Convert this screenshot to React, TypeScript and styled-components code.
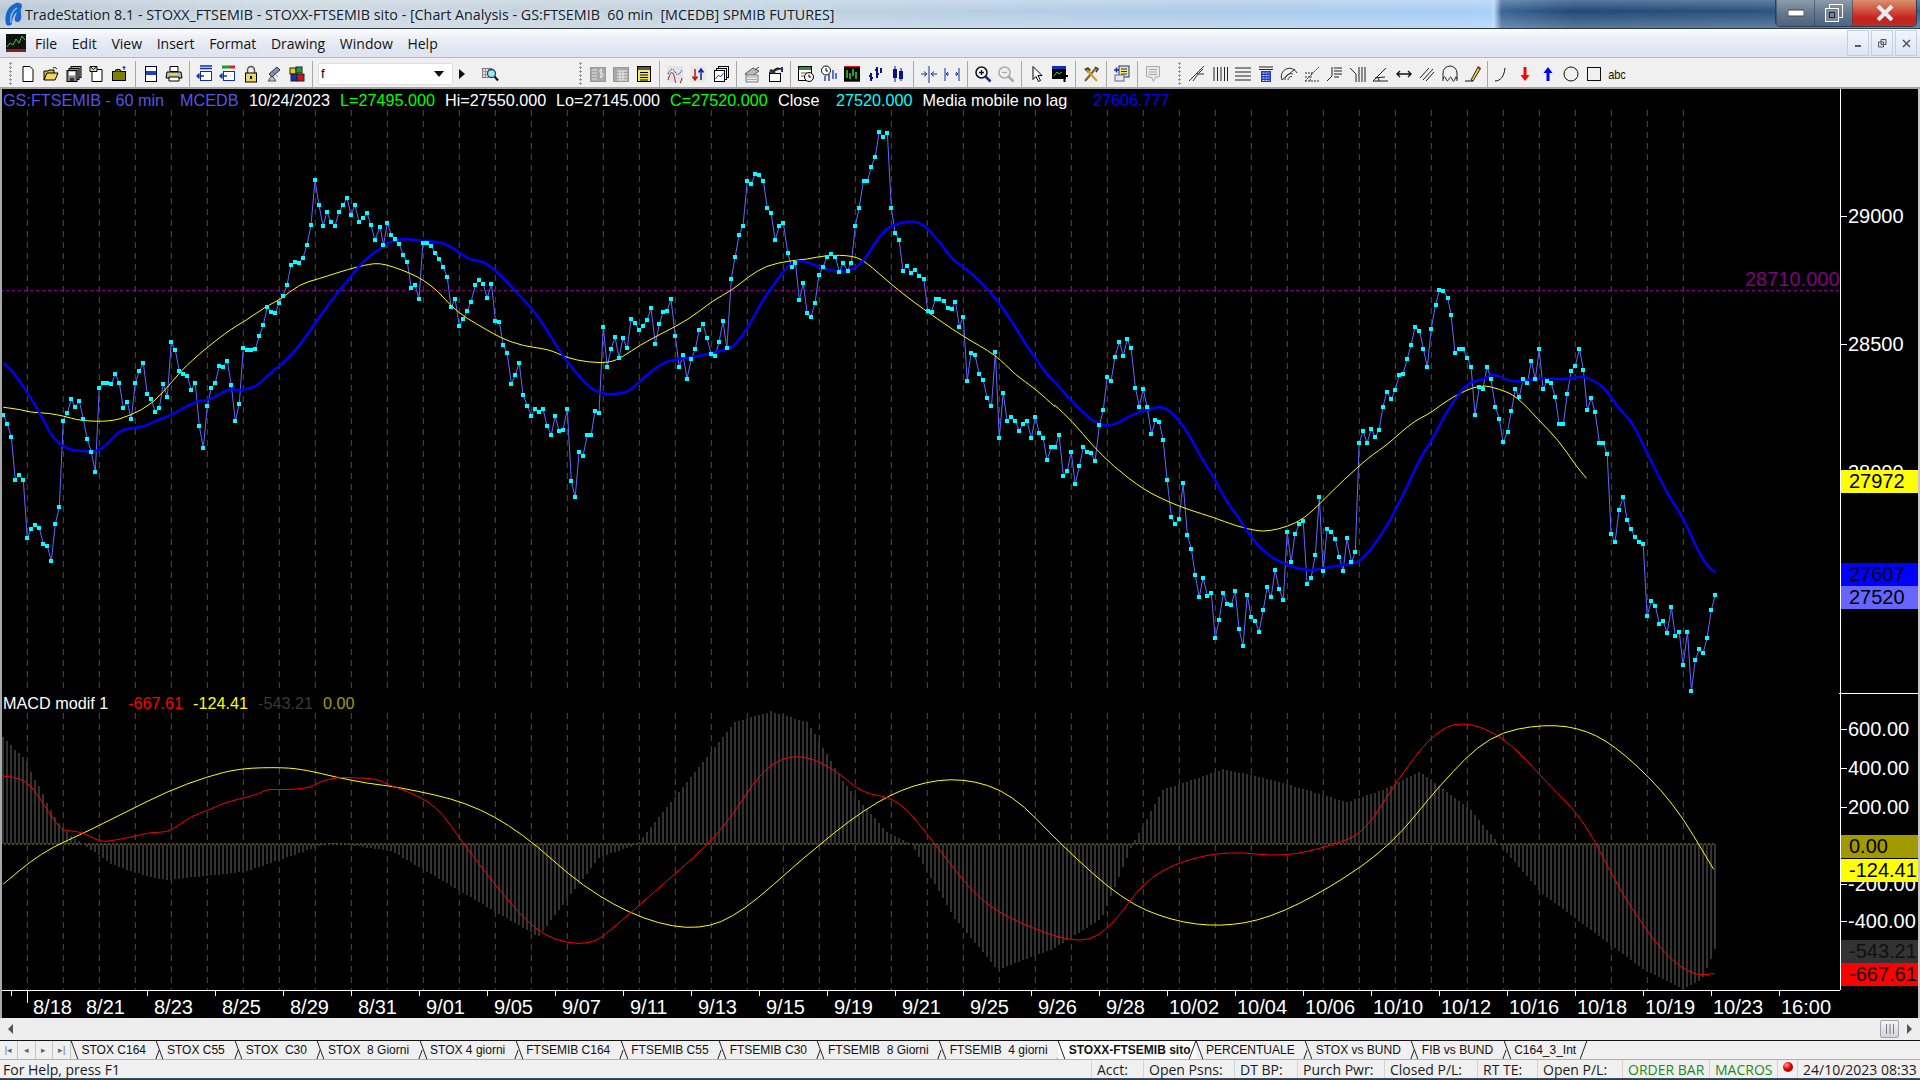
import React from "react";
import styled, { createGlobalStyle } from "styled-components";

type pt = [number, number];

// series are written as "x,y x,y ..." measured on enlarged crops of the chart
const pts = (s: string, bx = 0, by = 0, sx = 1, sy = 1): pt[] =>
  s
    .trim()
    .split(/\s+/)
    .map((p) => {
      const [x, y] = p.split(",").map(Number);
      return [bx + x / sx, by + y / sy] as pt;
    });

const Z12 = 1568 / 680;
const DISP = 1920 / 1568;

const price: pt[] = [
  ...pts(
    "10,345 22,372 34,411 46,540 58,525 70,540 82,714 94,687 106,675 118,684 130,732 142,738 154,783 166,672 178,621 190,362 202,339 214,297 226,321 238,303 250,357 262,417 274,456 286,516 298,264 310,249 322,249 334,252 346,222 358,249 370,324 382,306 394,357 406,249 418,213 430,189 442,282 454,297 466,336 478,324 490,252 502,291 514,126 526,150 538,213 550,222 562,228 574,270 586,249 598,378 610,444 622,318 634,264 646,249 658,198 670,201 682,183 694,255 706,363 718,312 730,144 742,150 754,150 766,147 778,108 790,75 802,21 814,36 826,39 838,9",
    0, 300, 3, 3
  ),
  ...pts(
    "283,296 287,285 291,265 295,262 299,263 303,258 307,245 311,225 315,180 319,205 323,226 327,212 331,222 335,226 339,212 343,205 347,198 351,215 355,205 359,222 363,218 367,213 371,225 375,240"
  ),
  ...pts(
    "0,320 8,375 17,308 26,345 35,358 44,372 54,405 63,425 72,505 81,495 90,537 99,368 108,368 118,377 127,398 136,417 146,442 155,470 164,562 173,536 183,618 192,598 201,572 210,545 220,494 229,480 238,493 247,534 257,493 266,602 275,605 284,675 293,698 303,792 312,765 321,728 330,825 340,858 349,887 358,868 367,875 376,868 385,917 395,945 404,888 413,933 422,930 432,868 441,1082 450,1132 459,997 468,1008 478,945 487,945 496,872 505,880 515,620 524,740 533,686 542,652 551,714 560,655 570,685 579,598 588,610 598,630 607,618 616,600 625,565 635,672 644,612 653,575 662,572 671,538 681,648 690,742 699,706 708,776 718,716 727,688 736,630 745,612 754,655 764,702 773,708 782,665 791,604 800,685 810,476 819,410 828,345 837,318 847,182 856,192 865,163 875,165 884,182 893,265 902,280 911,360 921,318 930,308 940,398 949,440 958,430 967,540 976,490 985,578 994,590 1003,550 1012,465 1022,440 1031,410 1040,403 1050,410 1059,456 1068,430 1078,452 1087,428 1096,318 1105,263 1115,182 1124,183 1133,140 1142,110 1151,35 1160,50 1170,40 1179,263 1188,340 1197,360 1206,453 1216,437 1225,460 1234,450 1244,468 1254,476 1263,572 1272,575 1281,538 1290,538 1300,543 1309,565 1318,566 1327,545 1336,620 1345,590 1354,783 1363,698 1372,706 1382,762 1391,780 1400,833 1410,858 1419,697 1428,955 1437,818 1446,902 1455,890 1465,902 1474,933 1483,912 1492,903 1502,955 1511,890 1520,938 1529,953 1538,1020 1548,982 1557,982 1566,945",
    380, 120, Z12, 3
  ),
  ...pts(
    "54,588 63,573 72,515 81,612 91,558 100,500 109,515 118,520 127,543 137,436 146,390 155,290 164,303 173,230 183,185 192,228 201,178 210,205 220,323 229,380 238,328 247,380 257,462 266,420 275,425 284,480 293,600 303,710 312,733 321,716 330,610 340,765 349,807 358,885 367,952 376,893 386,947 395,940 404,1074 413,1020 423,940 432,972 441,976 450,932 459,1047 468,1098 478,945 487,1012 496,1022 505,1055 515,990 524,922 533,952 542,870 551,927 561,960 570,755 579,846 588,762 598,733 607,722 616,912 625,895 635,825 644,650 653,873 662,746 671,755 681,776 690,830 699,873 708,775 718,846 727,817 736,490 745,452 754,490 764,446 773,472 782,449 791,380 800,335 810,357 819,330 828,286 837,282 847,236 856,194 865,140 875,152 884,206 893,262 902,147 912,76 921,30 930,32 940,53 948,104 957,218 967,206 976,208 985,233 994,260 1003,405 1013,322 1021,328 1031,260 1040,298 1050,380 1059,418 1068,487 1078,455 1087,393 1096,328 1105,352 1114,298 1124,310 1133,242 1142,298 1151,208 1160,327 1170,302 1179,310 1188,350 1197,432 1207,432 1216,341 1225,272 1234,258 1244,208 1253,270 1262,390 1271,355 1280,396 1290,488 1299,490 1308,521 1317,762 1326,787 1335,690 1345,650 1354,720 1363,747 1372,772 1382,786 1391,791 1400,1008 1410,962 1419,977 1428,1032 1437,1022 1446,1060 1456,982 1465,1068 1474,1055 1483,1155 1493,1055 1502,1234 1511,1140 1520,1108 1529,1120 1538,1075 1548,990 1557,946",
    1040, 280, Z12, 3
  ),
];

const blueMa: pt[] = [
  ...pts(
    "10,190 30,205 60,245 90,290 120,340 150,400 180,435 220,452 250,452 285,457 320,435 360,390 400,384 440,378 480,356 510,348 590,302 625,302 690,265 715,272 750,265 775,255 800,228 830,205 875,165 910,120 945,70 995,0",
    0, 300, 3, 3
  ),
  ...pts("345,284 362,262"),
  ...pts(
    "0,385 30,362 55,355 100,363 150,368 190,405 210,420 240,425 270,455 310,510 350,565 380,620 410,685 440,740 480,800 510,822 540,823 575,815 610,770 650,730 680,718 740,708 800,688 820,675 850,620 880,545 910,490 945,430 975,420 1010,440 1050,455 1085,452 1115,425 1140,370 1170,322 1200,308 1230,302 1255,315 1290,365 1320,420 1350,445 1385,485 1420,535 1450,590 1490,675 1530,750 1550,780",
    380, 120, Z12, 3
  ),
  ...pts(
    "30,300 70,360 110,410 137,436 170,437 210,405 250,388 283,378 310,405 340,455 370,530 400,590 430,665 460,715 490,780 530,830 570,855 600,867 630,872 680,857 725,851 750,830 790,760 820,690 850,610 880,525 900,490 935,400 975,325 995,305 1025,298 1045,280 1085,305 1115,304 1160,293 1205,300 1250,288 1280,303 1310,335 1330,380 1365,425 1400,520 1450,650 1480,705 1520,820 1540,860 1557,877",
    1040, 280, Z12, 3
  ),
];

const yellowMa: pt[] = [
  ...pts(
    "10,322 60,328 90,337 150,340 190,348 240,362 330,365 390,347 460,310 520,240 570,185 680,95 740,60 800,18 838,0",
    0, 300, 3, 3
  ),
  ...pts("300,284 318,279 349,269 370,264"),
  ...pts(
    "0,430 30,440 70,460 100,480 135,515 165,560 200,595 240,625 280,655 330,678 390,688 430,713 480,727 530,728 560,710 600,675 650,640 710,600 770,540 810,512 850,470 890,437 945,422 985,418 1030,405 1090,407 1120,425 1180,495 1250,565 1345,650 1420,705 1465,765 1510,805 1560,865",
    380, 120, Z12, 3
  ),
  ...pts(
    "30,370 75,425 120,495 170,560 240,630 300,668 345,690 400,712 450,737 500,753 530,753 570,740 610,715 650,665 700,600 760,530 800,495 860,425 900,400 950,350 1015,313 1060,327 1100,350 1150,420 1195,480 1235,555 1260,595",
    1040, 280, Z12, 3
  ),
];

const macd: pt[] = [
  ...pts(
    "10,288 40,290 80,305 110,340 145,395 180,445 200,453 245,455 300,485 330,483 400,470 450,457 500,457 530,440 575,408 620,393 680,365 770,345 800,327 860,330 930,323 960,305 1010,292 1060,293 1130,296 1165,315 1200,325",
    0, 680, 3, 3
  ),
  ...pts(
    "352,657 375,690 410,735 440,766 478,773 500,755 540,720 585,680 620,625 650,615 680,630 700,648 730,652 760,690 795,735 830,755 880,772 905,755 930,720 960,703 1000,695 1045,700 1085,690 1110,680 1135,640 1165,600 1190,588 1225,602 1260,640 1290,670 1320,730 1355,780 1380,797 1396,795",
    5, 0, 1 / DISP, 1 / DISP
  ),
];

const signal: pt[] = [
  ...pts(
    "10,612 25,600 90,545 160,500 250,460 370,400 500,335 620,290 720,265 850,262 920,270 1010,292 1100,310 1200,322",
    0, 680, 3, 3
  ),
  ...pts(
    "375,655 420,680 470,725 520,752 565,760 600,745 650,700 700,660 740,640 780,635 820,648 860,690 910,735 950,752 990,757 1030,750 1080,725 1130,690 1170,640 1210,600 1255,591 1290,596 1320,615 1360,655 1393,710",
    8, 0, 1 / DISP, 1 / DISP
  ),
];

const histEnv: pt[] = [
  ...pts(
    "10,170 20,180 30,190 40,205 50,215 60,220 70,230 80,240 90,265 100,290 120,320 140,365 165,410 190,445 215,470 240,485 262,500 290,520 330,550 400,575 450,590 500,600",
    0, 680, 3, 3
  ),
  ...pts(
    "200,712 270,688 320,695 380,730 440,765 490,700 520,690 560,640 600,590 630,581 660,590 690,640 725,680 745,690 780,750 815,792 860,775 900,750 925,690 950,645 1000,628 1050,640 1100,655 1130,645 1160,630 1200,660 1225,690 1260,730 1300,760 1340,790 1375,808 1390,800 1401,775",
    0, 0, 1 / DISP, 1 / DISP
  ),
];

const envAt = (x: number) => {
  for (let i = 1; i < histEnv.length; i++) {
    if (x <= histEnv[i][0]) {
      const [x0, y0] = histEnv[i - 1];
      const [x1, y1] = histEnv[i];
      return y0 + ((y1 - y0) * (x - x0)) / (x1 - x0);
    }
  }
  return histEnv[histEnv.length - 1][1];
};

const line = (p: pt[]) => p.map(([x, y]) => `${x.toFixed(1)},${y.toFixed(1)}`).join(" ");

const smooth = (p: pt[]) => {
  let d = `M${p[0][0].toFixed(1)} ${p[0][1].toFixed(1)}`;
  for (let i = 1; i < p.length - 1; i++) {
    const mx = (p[i][0] + p[i + 1][0]) / 2;
    const my = (p[i][1] + p[i + 1][1]) / 2;
    d += `Q${p[i][0].toFixed(1)} ${p[i][1].toFixed(1)} ${mx.toFixed(1)} ${my.toFixed(1)}`;
  }
  const last = p[p.length - 1];
  return d + `L${last[0].toFixed(1)} ${last[1].toFixed(1)}`;
};

const gridX = Array.from({ length: 47 }, (_, i) => 27.3 + 36 * i);
const barX = Array.from({ length: 429 }, (_, i) => 3.3 + 4 * i);
const ZERO = 844;

const timeLabels: [string, number][] = [
  ["8/18", 33], ["8/21", 86], ["8/23", 154], ["8/25", 222], ["8/29", 290], ["8/31", 358],
  ["9/01", 426], ["9/05", 494], ["9/07", 562], ["9/11", 630], ["9/13", 698], ["9/15", 766],
  ["9/19", 834], ["9/21", 902], ["9/25", 970], ["9/26", 1038], ["9/28", 1106], ["10/02", 1169],
  ["10/04", 1237], ["10/06", 1305], ["10/10", 1373], ["10/12", 1441], ["10/16", 1509],
  ["10/18", 1577], ["10/19", 1645], ["10/23", 1713], ["16:00", 1781],
];
const timeTicks = [11, 27.7, ...Array.from({ length: 25 }, (_, i) => 147 + 68 * i)];

const axisPlain: [string, number][] = [
  ["29000", 216], ["28500", 344], ["28000", 472],
  ["600.00", 729], ["400.00", 768], ["200.00", 807], ["-200.00", 884], ["-400.00", 921],
];
const axisBadges: [string, number, string, string][] = [
  ["27972", 470, "#ffff00", "#000"],
  ["27607", 563, "#0000ff", "#000"],
  ["27520", 586, "#6666ff", "#000"],
  ["0.00", 835, "#a09a00", "#000"],
  ["-124.41", 859, "#ffff00", "#000"],
  ["-543.21", 940, "#333333", "#111"],
  ["-667.61", 963, "#ff0000", "#000"],
];

const Chart = () => (
  <ChartSvg viewBox="0 89 1920 929" width={1920} height={929}>
    <rect x={0} y={89} width={1920} height={929} fill="#000" />
    <g stroke="#4c4c4c" strokeDasharray="6 5">
      {gridX.map((x) => (
        <React.Fragment key={x}>
          <line x1={x} x2={x} y1={110} y2={692} />
          <line x1={x} x2={x} y1={713} y2={990} />
        </React.Fragment>
      ))}
    </g>
    <line x1={0} x2={1840} y1={290.5} y2={290.5} stroke="#800080" strokeDasharray="3 3" />

    <polyline points={line(price)} fill="none" stroke="#6666ff" strokeWidth={1} />
    <path d={smooth(yellowMa)} fill="none" stroke="#ffff00" strokeWidth={1} />
    <path d={smooth(blueMa)} fill="none" stroke="#0000ff" strokeWidth={2.4} />
    <g fill="#00ffff" shapeRendering="crispEdges">
      {price.map(([x, y], i) => (
        <rect key={i} x={x - 2} y={y - 2} width={4} height={4} />
      ))}
    </g>

    <g stroke="#333333" strokeWidth={2} shapeRendering="crispEdges">
      {barX.map((x) => (
        <line key={x} x1={x} x2={x} y1={ZERO} y2={envAt(x)} />
      ))}
    </g>
    <line x1={0} x2={1716} y1={ZERO} y2={ZERO} stroke="#a09a00" strokeDasharray="2 2" />
    <path d={smooth(signal)} fill="none" stroke="#ffff00" strokeWidth={1} />
    <path d={smooth(macd)} fill="none" stroke="#ff0000" strokeWidth={1} />

    <text x={1745} y={286} fill="#800080" fontSize={20}>28710.000</text>

    <g stroke="#fff" shapeRendering="crispEdges">
      <line x1={1840.5} x2={1840.5} y1={89} y2={990} />
      <line x1={1839} x2={1918} y1={693.5} y2={693.5} />
      <line x1={2} x2={1840} y1={990.5} y2={990.5} />
      {timeTicks.map((x) => (
        <line key={x} x1={x} x2={x} y1={990} y2={x === 27.7 ? 1003 : 996} />
      ))}
      {axisPlain.map(([t, y]) => (
        <line key={t} x1={1840} x2={1847} y1={y} y2={y} />
      ))}
    </g>
    {timeLabels.map(([t, x]) => (
      <text key={t} x={x} y={1014} fill="#fff" fontSize={20}>{t}</text>
    ))}
    {axisPlain.map(([t, y]) => (
      <text key={t} x={1848} y={y + 7} fill="#fff" fontSize={20}>{t}</text>
    ))}
    {axisBadges.map(([t, y, bg, fg]) => (
      <React.Fragment key={t}>
        <rect x={1841} y={y} width={77} height={23} fill={bg} />
        <text x={1849} y={y + 18} fill={fg} fontSize={20}>{t}</text>
      </React.Fragment>
    ))}
    <rect x={0} y={89} width={2} height={929} fill="#a8a8a8" />
    <rect x={1918} y={89} width={2} height={929} fill="#c8c8c8" />
  </ChartSvg>
);

const k = "#000";
const toolIcons: Record<string, React.ReactNode> = {
  new: <path d="M4 1.5h7l3 3v12H4z" fill="#fff" stroke={k} />,
  open: (
    <>
      <path d="M2 15V6h4l1-1h5v3" fill="#d8c040" stroke={k} />
      <path d="M2 15l3-7h11l-3 7z" fill="#f0d860" stroke={k} />
      <path d="M11 3c2-1 3 0 4 1" fill="none" stroke={k} />
    </>
  ),
  saveall: (
    <>
      <rect x={6} y={1.5} width={10} height={11} fill="#aaa" stroke={k} />
      <rect x={4} y={3.5} width={10} height={11} fill="#999" stroke={k} />
      <rect x={2} y={5.5} width={10} height={11} fill="#888" stroke={k} />
      <rect x={4} y={6.5} width={6} height={4} fill="#fff" />
      <rect x={5} y={13} width={4} height={3} fill="#333" />
    </>
  ),
  notes: (
    <>
      <path d="M4 4.5h10v12H4z" fill="#fff" stroke={k} />
      <path d="M2 1.5h7v5H2z" fill="#e8e4a0" stroke={k} />
      <path d="M2 1.5l3.5 3 3.5-3" fill="none" stroke={k} />
    </>
  ),
  box: (
    <>
      <rect x={1.5} y={6.5} width={13} height={9} fill="#808000" stroke={k} />
      <path d="M4 6.5l1-2h4l1 2" fill="#808000" stroke={k} />
      <path d="M13 5V1.5M11.5 3L13 1.5 14.5 3" fill="none" stroke="#0000a0" />
    </>
  ),
  preview: (
    <>
      <rect x={3.5} y={1.5} width={11} height={15} fill="#fff" stroke="#003" />
      <rect x={4} y={6} width={10} height={4} fill="#2040c0" />
    </>
  ),
  print: (
    <>
      <path d="M5 1.5h8v5H5z" fill="#fff" stroke={k} />
      <path d="M2 7h14l1 6H1z" fill="#bbb" stroke={k} />
      <path d="M4 12h10v4H4z" fill="#fff" stroke={k} />
      <path d="M4 9h8" stroke="#e8d040" strokeWidth={2} />
    </>
  ),
  winBlue: (
    <>
      <path d="M4 1h12M4 3.5h12" stroke="#1030a0" strokeWidth={1.6} />
      <rect x={4.5} y={6.5} width={11} height={9} fill="#fff" stroke="#1030a0" />
      <path d="M8 11H1M3.5 8.5L1 11l2.5 2.5" fill="none" stroke="#1030a0" strokeWidth={1.3} />
    </>
  ),
  winColor: (
    <>
      <path d="M3 2h8" stroke="#10a030" strokeWidth={3} />
      <path d="M11 2h5" stroke="#e02020" strokeWidth={3} />
      <rect x={4.5} y={6.5} width={11} height={9} fill="#fff" stroke="#1030a0" />
      <path d="M8 11H1M3.5 8.5L1 11l2.5 2.5" fill="none" stroke="#1030a0" strokeWidth={1.3} />
    </>
  ),
  lock: (
    <>
      <path d="M5.5 8V5a3.5 3.5 0 017 0v3" fill="none" stroke="#555" strokeWidth={1.5} />
      <rect x={3.5} y={8} width={11} height={9} fill="#e8d860" stroke={k} />
      <rect x={8} y={11} width={2} height={3} fill="#000" />
    </>
  ),
  dish: (
    <>
      <path d="M3 16l4-6 4 6z" fill="#bbb" stroke="#555" />
      <path d="M4 9l8-7 3 3-8 7z" fill="#8090b0" stroke="#334" />
      <path d="M8 7l5 5" stroke="#667" strokeDasharray="1 1" />
    </>
  ),
  cubes: (
    <>
      <rect x={2} y={3} width={6} height={6} fill="#e8d000" stroke="#222" />
      <rect x={8} y={2} width={6} height={6} fill="#10a040" stroke="#222" />
      <rect x={3} y={9} width={6} height={7} fill="#1030c0" stroke="#222" />
      <rect x={9} y={9} width={7} height={7} fill="#d01020" stroke="#222" />
    </>
  ),
  find: (
    <>
      <rect x={1.5} y={3.5} width={9} height={9} fill="#dde" stroke="#777" />
      <path d="M1.5 6.5h9M1.5 9.5h9M4.5 3.5v9M7.5 3.5v9" stroke="#999" />
      <circle cx={10.5} cy={8.5} r={4} fill="#a0e8f0" stroke="#245" strokeWidth={1.3} />
      <path d="M13.5 11.5l3.5 4" stroke="#111" strokeWidth={2} />
    </>
  ),
  grayDollar: (
    <>
      <rect x={1.5} y={2.5} width={15} height={14} fill="#a8a8a8" stroke="#999" />
      <path d="M3 5h5M3 8h5M3 11h5M3 14h5" stroke="#ddd" />
      <path d="M13 5c-3-1-3 3 0 3.5s1 4-2 3M12 3.5v10" fill="none" stroke="#eee" />
    </>
  ),
  grayGrid: (
    <>
      <rect x={1.5} y={2.5} width={15} height={14} fill="#a8a8a8" stroke="#999" />
      <path d="M5 6h10M5 9h10M5 12h10M5 15h10M8 6v9M11 6v9" stroke="#eee" />
    </>
  ),
  yellowTable: (
    <>
      <rect x={2.5} y={1.5} width={13} height={15} fill="#f4e860" stroke={k} />
      <rect x={3} y={2} width={12} height={3} fill="#555" />
      <path d="M5 7.5h8M5 10h8M5 12.5h8M5 15h8" stroke={k} />
    </>
  ),
  waveDots: (
    <>
      <rect x={1} y={1} width={16} height={16} fill="#e4e4e4" />
      <path d="M2 15c3-10 5-10 7 0s4 8 7-2" fill="none" stroke="#b01010" />
      <path d="M2 9c3-6 5-6 7-2s4 3 7-2" fill="none" stroke="#1020b0" strokeDasharray="1.5 1" />
    </>
  ),
  arrowsUD: (
    <>
      <rect x={1} y={1} width={16} height={16} fill="#e8e8e8" />
      <path d="M6 4v10M3.5 11.5L6 15l2.5-3.5" fill="none" stroke="#c01010" strokeWidth={1.5} />
      <path d="M12 15V5M9.5 7.5L12 4l2.5 3.5" fill="none" stroke="#1020a0" strokeWidth={1.5} />
    </>
  ),
  stackChart: (
    <>
      <rect x={6.5} y={1.5} width={10} height={11} fill="#eee" stroke={k} />
      <rect x={4.5} y={3.5} width={10} height={11} fill="#eee" stroke={k} />
      <rect x={2.5} y={5.5} width={10} height={11} fill="#fff" stroke={k} />
      <path d="M3.5 14l3-4 2 2 3-4" fill="none" stroke="#1040c0" />
    </>
  ),
  grayTilt: (
    <>
      <path d="M2 9l8-6 6 3-8 6z" fill="#bbb" stroke="#555" />
      <path d="M3 10h12v7H3z" fill="#eee" stroke="#777" />
      <path d="M4 12h10M4 14.5h10" stroke="#aaa" />
      <path d="M12 5l4-3" stroke="#2040b0" />
    </>
  ),
  boxArrow: (
    <>
      <path d="M3 8l8-5 5 1" fill="#333" stroke={k} />
      <rect x={3.5} y={8.5} width={11} height={8} fill="#fff" stroke={k} />
      <path d="M4 5l5 3" stroke="#333" strokeWidth={3} />
      <path d="M16 2v5" stroke="#1030a0" strokeWidth={2} />
    </>
  ),
  calClock: (
    <>
      <rect x={1.5} y={1.5} width={13} height={14} fill="#fff" stroke={k} />
      <rect x={2} y={2} width={12} height={3} fill="#209040" />
      <path d="M4 8h6M4 11h4" stroke="#a03030" />
      <circle cx={12} cy={12} r={4.5} fill="#f4f4f4" stroke={k} />
      <path d="M12 9.5V12h2" fill="none" stroke={k} />
    </>
  ),
  clockBars: (
    <>
      <circle cx={6} cy={5.5} r={4.5} fill="#fff" stroke={k} />
      <path d="M6 3v3h2" fill="none" stroke={k} />
      <path d="M5 11v5M9 9v7M13 5v9M16 8v6" stroke="#1030a0" strokeWidth={1.3} />
    </>
  ),
  blackBars: (
    <>
      <rect x={1} y={1} width={16} height={16} fill="#000" />
      <path d="M4 5v8M7 8v6M10 4v7M13 7v7" stroke="#20e020" strokeWidth={1.5} />
      <path d="M1 16.5h16M1 1.5h16" stroke="#e01010" />
    </>
  ),
  navyBars: (
    <>
      <path d="M5 8v8M3 11h2M5 13h2M11 2v11M9 5h2M11 9h2" stroke="#101080" strokeWidth={2} />
      <path d="M15 3v5" stroke="#101080" strokeWidth={2} />
    </>
  ),
  candles: (
    <>
      <path d="M6 1v16M12 3v13" stroke="#101080" />
      <rect x={4} y={4} width={4} height={9} fill="#101080" />
      <rect x={10} y={6} width={4} height={8} fill="#101080" />
    </>
  ),
  squeeze: (
    <path d="M9 1v17M1 9h5M4 6.5L7 9l-3 2.5M17 9h-5M14 6.5L11 9l3 2.5" fill="none" stroke="#1030a0" />
  ),
  stretch: (
    <path d="M2 3v13M16 3v13M6 9H3M5 7L3 9l2 2M12 9h3M13 7l2 2-2 2" fill="none" stroke="#1030a0" />
  ),
  zoomIn: (
    <>
      <circle cx={7.5} cy={7.5} r={5.5} fill="#f0f4ff" stroke="#111" strokeWidth={1.5} />
      <path d="M5 7.5h5M7.5 5v5" stroke="#111" strokeWidth={1.3} />
      <path d="M11.5 11.5L16.5 16.5" stroke="#103090" strokeWidth={2.5} />
    </>
  ),
  zoomOut: (
    <>
      <circle cx={7.5} cy={7.5} r={5.5} fill="#f0f0f0" stroke="#aaa" strokeWidth={1.5} />
      <path d="M5 7.5h5" stroke="#aaa" strokeWidth={1.3} />
      <path d="M11.5 11.5L16.5 16.5" stroke="#aaa" strokeWidth={2.5} />
    </>
  ),
  cursor: <path d="M5 1.5v13l3-3 2.5 5 2-1-2.5-5h4z" fill="#fff" stroke={k} />,
  chartT: (
    <>
      <rect x={1} y={1} width={14} height={3} fill="#1030c0" />
      <rect x={1} y={4} width={14} height={10} fill="#000" />
      <path d="M3 11l3-4 2 2 3-2" fill="none" stroke="#20e020" />
      <path d="M10 11h7M13.5 11v6" stroke="#000" strokeWidth={2} />
    </>
  ),
  tools: (
    <>
      <path d="M3 16L14 3" stroke="#806020" strokeWidth={2} />
      <path d="M2 4l4-2 3 3-3 3z" fill="#444" />
      <path d="M15 16L5 5" stroke="#c8a020" strokeWidth={2} />
      <path d="M13 2l3 2-2 3" fill="none" stroke="#333" strokeWidth={1.5} />
    </>
  ),
  blueGrid: (
    <>
      <rect x={6} y={1} width={10} height={11} fill="#f4e880" stroke="#1030a0" />
      <path d="M8 4h6M8 6.5h6M8 9h6" stroke="#1030a0" />
      <rect x={2} y={10} width={9} height={6} fill="#e0e8f4" stroke="#667" />
      <path d="M1 5h5M3.5 2.5v5" stroke="#1030a0" strokeWidth={1.5} />
    </>
  ),
  grayNote: (
    <>
      <path d="M2.5 1.5h13v10l-4 1-2 4-2-4-5-1z" fill="#e8e8e8" stroke="#aaa" />
      <path d="M5 4.5h8M5 7h8M5 9.5h8" stroke="#aaa" />
    </>
  ),
  fork: <path d="M1 16l7-7 8-8M5 16l5-7 5-5M9 9l7 0" fill="none" stroke="#333" />,
  vlines: <path d="M3 2v14M6.5 2v14M10 2v14M13.5 2v14M16.5 2v14" stroke="#222" />,
  hlines: <path d="M1 3h16M1 7h16M1 11h16M1 15h16" stroke="#222" strokeWidth={1.2} />,
  calc: (
    <>
      <path d="M2 2h14M2 4.5h14" stroke="#222" />
      <rect x={4} y={6} width={10} height={11} fill="#2040c0" />
      <path d="M5.5 8h7M5.5 10.5h7M5.5 13h7M5.5 15.5h7" stroke="#dde" strokeDasharray="2 1" />
    </>
  ),
  arcs: (
    <path d="M2 15a8 8 0 0115-7M5 15a6 6 0 018-6M8 15a3.5 3.5 0 014-3.5M2 15L15 4" fill="none" stroke="#333" />
  ),
  fan: (
    <path d="M2 16h14M2 16L16 2M7 16l2-9M2 12h6M2 8h9" fill="none" stroke="#333" strokeDasharray="2 1" />
  ),
  steps: <path d="M1 16l5-5v-9M8 3h8M8 6h8M8 9h8M8 12h5" fill="none" stroke="#222" />,
  yLines: <path d="M1 3l6 6v8M10 2v15M13 2v15M16 2v15" fill="none" stroke="#222" />,
  angle: <path d="M1 16h15M1 16L14 3M7 16a7 7 0 00-2-5M3 13l10-1" fill="none" stroke="#222" />,
  width: <path d="M2 9h14M5 6L2 9l3 3M13 6l3 3-3 3" fill="none" stroke="#111" strokeWidth={1.3} />,
  slashes: <path d="M2 13L11 3M5 15l10-11M8 16l8-9" fill="none" stroke="#222" />,
  gann: (
    <path d="M2 16V8a7 7 0 0114 0v8M2 14c1-3 2-3 3 0s2 2 3 0 2-3 3 0 2 3 3 0 1-3 2 0" fill="none" stroke="#222" />
  ),
  pen: (
    <>
      <path d="M1 16h8" stroke="#111" />
      <path d="M7 15l7-13 2.5 1.5L9 16z" fill="#f0d030" stroke="#222" />
      <path d="M13 3l1-2 2.5 1.5-1 2z" fill="#c02020" />
    </>
  ),
  curve: <path d="M2 16c5 0 9-4 10-13" fill="none" stroke="#111" />,
  down: <path d="M7.5 2h3v8h3L9 16 4.5 10h3z" fill="#f00" />,
  up: <path d="M7.5 16h3V8h3L9 2 4.5 8h3z" fill="#00f" />,
  circle: <circle cx={9} cy={9} r={7} fill="none" stroke="#111" />,
  rect: <rect x={2.5} y={2.5} width={13} height={13} fill="none" stroke="#111" />,
};

const Tool = ({ name }: { name: string }) => (
  <ToolButton>
    <svg viewBox="0 0 18 18" width={18} height={18}>
      {toolIcons[name]}
    </svg>
  </ToolButton>
);

const Tools = ({ names }: { names: string }) => (
  <>
    {names.split(" ").map((n) => (
      <Tool key={n} name={n} />
    ))}
  </>
);

const tabs = [
  "STOX C164", "STOX C55", "STOX  C30", "STOX  8 Giorni", "STOX 4 giorni", "FTSEMIB C164",
  "FTSEMIB C55", "FTSEMIB C30", "FTSEMIB  8 Giorni", "FTSEMIB  4 giorni", "STOXX-FTSEMIB sito",
  "PERCENTUALE", "STOX vs BUND", "FIB vs BUND", "C164_3_Int",
];

const statusCells: [string, number, string?][] = [
  ["Acct:", 52], ["Open Psns:", 91], ["DT BP:", 63], ["Purch Pwr:", 87], ["Closed P/L:", 93],
  ["RT TE:", 60], ["Open P/L:", 85], ["ORDER BAR", 87, "#1a8a1a"], ["MACROS", 68, "#1a8a1a"],
];

const legend: [string, number, string][] = [
  ["GS:FTSEMIB - 60 min", 177, "#5555e8"],
  ["MCEDB", 69, "#5555e8"],
  ["10/24/2023", 91, "#fff"],
  ["L=27495.000", 105, "#00ff00"],
  ["Hi=27550.000", 111, "#fff"],
  ["Lo=27145.000", 114, "#fff"],
  ["C=27520.000", 108, "#00ff00"],
  ["Close", 58, "#fff"],
  ["27520.000", 86.5, "#00ffff"],
  ["Media mobile no lag", 170.5, "#fff"],
  ["27606.777", 90, "#0000ff"],
];

const subLegend: [string, number, string][] = [
  ["MACD modif 1", 125, "#fff"],
  ["-667.61", 65, "#ff0000"],
  ["-124.41", 65, "#ffff00"],
  ["-543.21", 65, "#3a3a3a"],
  ["0.00", 60, "#a09a00"],
];

const LegendRow = ({ items, $top }: { items: [string, number, string][]; $top: number }) => (
  <Legend $top={$top}>
    {items.map(([t, w, c]) => (
      <LegendItem key={t} $w={w} $c={c}>{t}</LegendItem>
    ))}
  </Legend>
);

const App = () => (
  <Page>
    <Global />
    <TitleBar>
      <svg width={22} height={24} viewBox="0 0 22 24">
        <path d="M3 22C1 14 4 4 13 1c6-1 7 3 5 6-1 3 1 6 0 10-1 3-4 4-6 2-1-3 1-6 2-9-3 2-5 7-5 12-2 2-5 2-6 0z" fill="#1c64c8" />
        <path d="M8 21c-1-6 1-12 6-15" fill="none" stroke="#7ab8f0" strokeWidth={1.5} />
      </svg>
      <TitleText>TradeStation 8.1 - STOXX_FTSEMIB - STOXX-FTSEMIB sito - [Chart Analysis - GS:FTSEMIB  60 min  [MCEDB] SPMIB FUTURES]</TitleText>
      <Controls>
        <WinButton $w={37}>
          <svg width={16} height={8} viewBox="0 0 16 8"><rect x={0} y={1} width={16} height={6} fill="#fff" stroke="#445" /></svg>
        </WinButton>
        <WinButton $w={37}>
          <svg width={20} height={20} viewBox="0 0 20 20"><rect x={5.5} y={1.5} width={13} height={13} fill="none" stroke="#fff" /><rect x={1.5} y={5.5} width={13} height={13} fill="#7a8a9a" stroke="#fff" /><rect x={5.5} y={9.5} width={5} height={5} fill="none" stroke="#223" /></svg>
        </WinButton>
        <WinButton $w={63} $close>
          <svg width={18} height={16} viewBox="0 0 18 16"><path d="M2 1l14 14M16 1L2 15" stroke="#e8eef4" strokeWidth={4} /></svg>
        </WinButton>
      </Controls>
    </TitleBar>

    <MenuBar>
      <svg width={20} height={18} viewBox="0 0 20 18">
        <rect width={20} height={18} fill="#111" />
        <rect y={15} width={20} height={3} fill="#802020" />
        <path d="M1 13l3-4 3 2 3-6 3 4 3-7 3 4" fill="none" stroke="#30d040" />
      </svg>
      <MenuItems>
        {["File", "Edit", "View", "Insert", "Format", "Drawing", "Window", "Help"].map((m) => (
          <MenuItem key={m}>{m}</MenuItem>
        ))}
      </MenuItems>
      <MdiButtons>
        <MdiButton><svg width={9} height={9} viewBox="0 0 9 9"><rect x={1} y={6} width={6} height={2} fill="#556" /></svg></MdiButton>
        <MdiButton><svg width={9} height={9} viewBox="0 0 9 9"><path d="M3 .5h5v5H3zM.5 3h5v5h-5z" fill="#dde" stroke="#556" /></svg></MdiButton>
        <MdiButton><svg width={9} height={9} viewBox="0 0 9 9"><path d="M1 1l7 7M8 1L1 8" stroke="#556" strokeWidth={1.6} /></svg></MdiButton>
      </MdiButtons>
    </MenuBar>

    <ToolBar>
      <Grip />
      <Tools names="new open saveall notes box" />
      <Sep />
      <Tools names="preview print" />
      <Sep />
      <Tools names="winBlue winColor lock dish cubes" />
      <Sep />
      <Combo>
        <span>f</span>
        <ComboArrow />
      </Combo>
      <PlayArrow />
      <FindSlot>
        <Tool name="find" />
      </FindSlot>
      <Grip $gap={77.5} />
      <Tools names="grayDollar grayGrid yellowTable" />
      <Sep />
      <Tools names="waveDots arrowsUD stackChart" />
      <Sep />
      <Tools names="grayTilt boxArrow" />
      <Sep />
      <Tools names="calClock clockBars blackBars navyBars candles" />
      <Sep />
      <Tools names="squeeze stretch" />
      <Sep />
      <Tools names="zoomIn zoomOut" />
      <Sep />
      <Tools names="cursor chartT" />
      <Sep />
      <Tool name="tools" />
      <Sep />
      <Tool name="blueGrid" />
      <Sep />
      <Tool name="grayNote" />
      <Grip $gap={13.5} />
      <Tools names="fork vlines hlines calc arcs fan steps yLines angle width slashes gann pen" />
      <Sep $w={6} />
      <Tools names="curve down up circle rect" />
      <ToolButton><AbcText>abc</AbcText></ToolButton>
    </ToolBar>

    <ChartArea>
      <Chart />
      <LegendRow items={legend} $top={2} />
      <LegendRow items={subLegend} $top={605} />
    </ChartArea>

    <ScrollBar>
      <ScrollArrow $left />
      <ScrollThumb>
        <svg width={10} height={10} viewBox="0 0 10 10"><path d="M1.5 0v10M5 0v10M8.5 0v10" stroke="#778" /></svg>
      </ScrollThumb>
      <ScrollArrow />
    </ScrollBar>

    <TabsBar>
      <TabNav>
        {["|◂", "◂", "▸", "▸|"].map((t) => (
          <TabNavButton key={t}>{t}</TabNavButton>
        ))}
      </TabNav>
      {tabs.map((t, i) => (
        <Tab key={t} $active={t === "STOXX-FTSEMIB sito"} $last={i === tabs.length - 1}>{t}</Tab>
      ))}
    </TabsBar>

    <StatusBar>
      <HelpText>For Help, press F1</HelpText>
      {statusCells.map(([t, w, c]) => (
        <StatusCell key={t} $w={w} $c={c}>{t}</StatusCell>
      ))}
      <StatusCell $w={20}><RedDot /></StatusCell>
      <StatusCell $w={123}>24/10/2023 08:33</StatusCell>
    </StatusBar>
  </Page>
);

export default App;

const Global = createGlobalStyle`
  html, body {
    margin: 0;
    padding: 0;
    background: #2c3e50;
    overflow: hidden;
  }
`;

const uiFont = `"Open Sans", "Liberation Sans", sans-serif`;

const Page = styled.div`
  width: 1920px;
  height: 1080px;
  display: flex;
  flex-direction: column;
  overflow: hidden;
  font-family: "Liberation Sans", sans-serif;
`;

const TitleBar = styled.div`
  height: 28px;
  flex: none;
  display: flex;
  align-items: center;
  padding-left: 3px;
  border-bottom: 1px solid #2a3a48;
  background:
    linear-gradient(180deg, rgba(255, 255, 255, 0.25), rgba(255, 255, 255, 0) 40%, rgba(255, 255, 255, 0.25)),
    linear-gradient(90deg, #b4c6d4 0, #c9d6e0 15%, #c2d0dc 30%, #bcd0e2 45%, #aecbe8 62%, #a8cdf4 76%, #a8d0f8 77.6%, #b8d8f8 77.8%, #3a6694 78.2%, #214a78 82%, #2a5480 92%, #3a5f88 100%);
`;

const TitleText = styled.span`
  font: 14.3px ${uiFont};
  color: #14202a;
  white-space: pre;
  text-shadow: 0 0 6px rgba(255, 255, 255, 0.9);
`;

const Controls = styled.div`
  margin-left: auto;
  margin-right: 3px;
  align-self: flex-start;
  display: flex;
  height: 26px;
  border: 1px solid #2c3f52;
  border-top: none;
  border-radius: 0 0 5px 5px;
  overflow: hidden;
`;

const WinButton = styled.div<{ $w: number; $close?: boolean }>`
  width: ${(p) => p.$w}px;
  display: flex;
  align-items: center;
  justify-content: center;
  border-left: 1px solid rgba(40, 60, 80, 0.5);
  background: ${(p) =>
    p.$close
      ? "linear-gradient(180deg, #d89070 0, #cf4a3a 45%, #c82020 70%, #b83020 100%)"
      : "linear-gradient(180deg, #8c9cac 0, #66788c 50%, #4c6480 100%)"};
`;

const MenuBar = styled.div`
  height: 28px;
  flex: none;
  display: flex;
  align-items: center;
  padding-left: 6px;
  border-bottom: 1px solid #b4b8c0;
  background: linear-gradient(180deg, #fdfdfe 0, #eef0f7 30%, #e2e6f2 70%, #dfe3f0 100%);
`;

const MenuItems = styled.div`
  display: flex;
  gap: 14.7px;
  margin-left: 9px;
`;

const MenuItem = styled.span`
  font: 14px ${uiFont};
  color: #111;
`;

const MdiButtons = styled.div`
  margin-left: auto;
  margin-right: 3px;
  display: flex;
  gap: 2px;
`;

const MdiButton = styled.div`
  width: 22px;
  height: 26px;
  box-sizing: border-box;
  display: flex;
  align-items: center;
  justify-content: center;
  background: linear-gradient(180deg, #f2f6fc, #dbe6f4);
  border: 1px solid #c4d0de;
`;

const ToolBar = styled.div`
  height: 31px;
  flex: none;
  box-sizing: border-box;
  display: flex;
  align-items: center;
  padding: 2px 0 0 9px;
  background: #f0f0f0;
  border-bottom: 2px solid #a4a4a4;
`;

const Grip = styled.div<{ $gap?: number }>`
  width: 7.5px;
  height: 24px;
  flex: none;
  margin-left: ${(p) => p.$gap ?? 0}px;
  background: radial-gradient(circle at 1.5px 1.5px, #9a9a9a 1px, transparent 1.2px) 0 0 / 4px 4px repeat-y;
`;

const ToolButton = styled.div`
  width: 23px;
  height: 24px;
  flex: none;
  display: flex;
  align-items: center;
  justify-content: center;
`;

const Sep = styled.div<{ $w?: number }>`
  width: ${(p) => p.$w ?? 8}px;
  height: 26px;
  flex: none;
  display: flex;
  justify-content: center;
  &::before {
    content: "";
    width: 1px;
    background: #a8a8a8;
  }
`;

const AbcText = styled.span`
  font: 11px "Liberation Sans", sans-serif;
  color: #111;
  transform: scaleY(1.2);
`;

const Combo = styled.div`
  width: 135px;
  height: 22px;
  flex: none;
  box-sizing: border-box;
  margin-left: 1.5px;
  padding: 0 8px 0 2px;
  display: flex;
  align-items: center;
  justify-content: space-between;
  background: #fff;
  border: 1px solid #e0e0e0;
  border-radius: 2px;
  font: 13px "Liberation Sans", sans-serif;
`;

const ComboArrow = styled.i`
  border-left: 5px solid transparent;
  border-right: 5px solid transparent;
  border-top: 6px solid #111;
`;

const PlayArrow = styled.i`
  margin-left: 6px;
  flex: none;
  border-top: 5px solid transparent;
  border-bottom: 5px solid transparent;
  border-left: 6px solid #111;
`;

const FindSlot = styled.div`
  margin-left: 13.5px;
  flex: none;
`;

const ChartArea = styled.div`
  position: relative;
  height: 929px;
  flex: none;
`;

const ChartSvg = styled.svg`
  display: block;
  font-family: "Liberation Sans", sans-serif;
`;

const Legend = styled.div<{ $top: number }>`
  position: absolute;
  left: 3px;
  top: ${(p) => p.$top}px;
  display: flex;
  height: 18px;
  align-items: center;
`;

const LegendItem = styled.span<{ $w: number; $c: string }>`
  width: ${(p) => p.$w}px;
  flex: none;
  font-size: 16.2px;
  white-space: nowrap;
  color: ${(p) => p.$c};
`;

const ScrollBar = styled.div`
  height: 22px;
  flex: none;
  display: flex;
  align-items: center;
  padding: 0 8px;
  background: #ededed;
  border-bottom: 1px solid #111;
`;

const ScrollArrow = styled.i<{ $left?: boolean }>`
  border-top: 5px solid transparent;
  border-bottom: 5px solid transparent;
  ${(p) =>
    p.$left
      ? "border-right: 5px solid #555;"
      : "border-left: 5px solid #555; margin-left: 8px;"}
`;

const ScrollThumb = styled.div`
  margin-left: auto;
  width: 19px;
  height: 18px;
  display: flex;
  align-items: center;
  justify-content: center;
  background: linear-gradient(180deg, #f4f4f6, #d4d4d8);
  border: 1px solid #a4a4a8;
  border-radius: 2px;
  box-sizing: border-box;
`;

const TabsBar = styled.div`
  height: 19px;
  flex: none;
  display: flex;
  align-items: stretch;
  background: #f0f0f0;
  border-bottom: 1px solid #b0b0b0;
  box-sizing: border-box;
`;

const TabNav = styled.div`
  width: 71px;
  flex: none;
  display: flex;
`;

const TabNavButton = styled.div`
  width: 17px;
  display: flex;
  align-items: center;
  justify-content: center;
  border-right: 1px solid #c4c4c4;
  font-size: 9px;
  color: #666;
`;

const Tab = styled.div<{ $active?: boolean; $last?: boolean }>`
  position: relative;
  padding: 0 ${(p) => (p.$active ? 5 : 10.5)}px 0 10.5px;
  display: flex;
  align-items: center;
  font-size: 12px;
  font-weight: ${(p) => (p.$active ? 700 : 400)};
  white-space: pre;
  color: #111;
  background: ${(p) => (p.$active ? "#fff" : "transparent")};
  &::before,
  &::after {
    content: "";
    position: absolute;
    bottom: 0;
    width: 1px;
    background: #222;
  }
  /* left edge runs the full height, the right edge stops where the next tab's edge crosses it */
  &::before {
    top: 0;
    left: 3px;
    transform: skewX(20deg);
  }
  &::after {
    top: ${(p) => (p.$active || p.$last ? "0" : "50%")};
    right: ${(p) => (p.$active || p.$last ? "3px" : "-1.3px")};
    transform: skewX(-20deg);
  }
`;

const StatusBar = styled.div`
  height: 18px;
  flex: none;
  display: flex;
  align-items: center;
  background: #f0f0f0;
  border-bottom: 1px solid #3c4c5c;
  font: 14px ${uiFont};
  color: #1a1a1a;
`;

const HelpText = styled.span`
  flex: 1;
  padding-left: 3px;
`;

const StatusCell = styled.div<{ $w: number; $c?: string }>`
  width: ${(p) => p.$w}px;
  height: 100%;
  flex: none;
  box-sizing: border-box;
  padding-left: 5px;
  display: flex;
  align-items: center;
  white-space: nowrap;
  border-left: 1px solid #d4d4d4;
  color: ${(p) => p.$c ?? "inherit"};
`;

const RedDot = styled.i`
  width: 10px;
  height: 10px;
  margin-top: -4px;
  border-radius: 50%;
  background: radial-gradient(circle at 35% 30%, #ff9a9a, #e00000 45%, #700000);
`;
